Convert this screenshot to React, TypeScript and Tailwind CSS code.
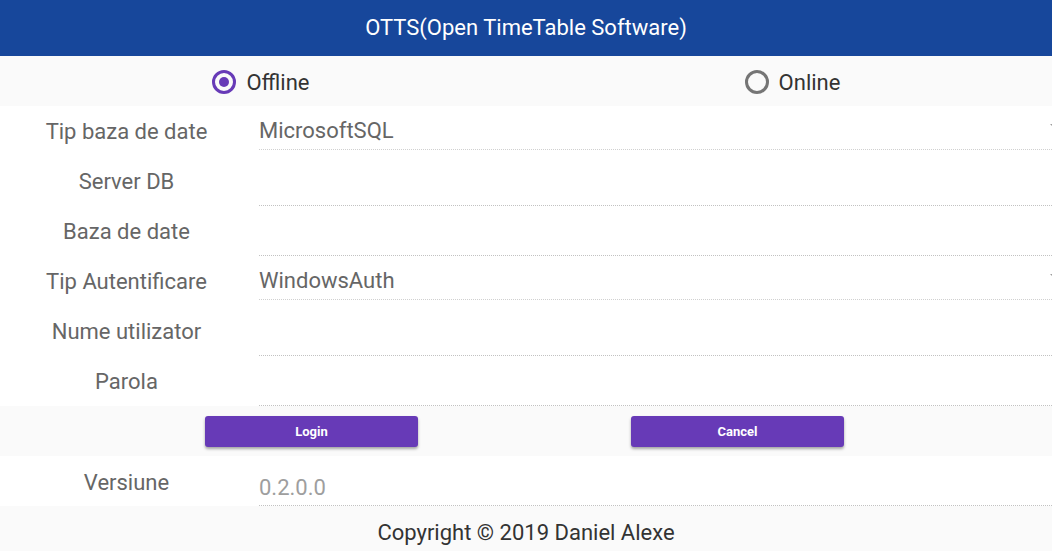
import { useState } from "react";

const fieldRows = [
    { label: "Tip baza de date", value: "MicrosoftSQL", select: true },
    { label: "Server DB", value: "", select: false },
    { label: "Baza de date", value: "", select: false },
    { label: "Tip Autentificare", value: "WindowsAuth", select: true },
    { label: "Nume utilizator", value: "", select: false },
    { label: "Parola", value: "", select: false },
];

const Radio = ({ checked, label, onClick }: { checked: boolean; label: string; onClick: () => void }) => (
    <button type="button" onClick={onClick} className="flex items-center gap-[10px]">
        <span
            className={
                checked
                    ? "w-[24px] h-[24px] rounded-full border-[3px] border-[#673ab7] flex items-center justify-center"
                    : "w-[24px] h-[24px] rounded-full border-[3px] border-[#757575] flex items-center justify-center"
            }
        >
            {checked && <span className="w-[10px] h-[10px] rounded-full bg-[#673ab7]" />}
        </span>
        <span className="text-[22px] text-[#333]">{label}</span>
    </button>
);

const App = () => {
    const [mode, setMode] = useState<"offline" | "online">("offline");

    return (
        <div className="w-[1052px] h-[551px] overflow-hidden bg-white font-['Roboto',sans-serif]">
            <div className="h-[56px] bg-[#17479b] flex items-center justify-center pb-[2px]">
                <h1 className="text-white text-[22px]">OTTS(Open TimeTable Software)</h1>
            </div>

            <div className="h-[50px] bg-[#fafafa] grid grid-cols-2">
                <div className="flex items-center justify-center pr-[4px] pt-[2px]">
                    <Radio checked={mode === "offline"} label="Offline" onClick={() => setMode("offline")} />
                </div>
                <div className="flex items-center justify-center pl-[7px] pt-[2px]">
                    <Radio checked={mode === "online"} label="Online" onClick={() => setMode("online")} />
                </div>
            </div>

            {fieldRows.map((row) => (
                <div key={row.label} className="h-[50px] flex items-start">
                    <div className="w-[253px] h-[50px] flex items-center justify-center text-[22px] text-[#666]">
                        {row.label}
                    </div>
                    <div
                        className={
                            row.select
                                ? "ml-[6px] flex-1 h-[44px] pt-[6px] flex items-center justify-between border-b border-dotted border-[#d0d0d0]"
                                : "ml-[6px] flex-1 h-[50px] border-b border-dotted border-[#c2c2c2]"
                        }
                    >
                        {row.select && (
                            <>
                                <span className="text-[22px] text-[#666]">{row.value}</span>
                                <span className="mr-[-8px] mb-[8px] w-0 h-0 border-l-[5px] border-r-[5px] border-t-[5px] border-l-transparent border-r-transparent border-t-[#9e9e9e]" />
                            </>
                        )}
                    </div>
                </div>
            ))}

            <div className="h-[50px] bg-[#fafafa] grid grid-cols-2">
                <div className="pl-[205px] pt-[10px]">
                    <button
                        type="button"
                        className="w-[213px] h-[31px] rounded-[3px] bg-[#673ab7] text-white text-[13px] font-bold shadow-[0_2px_3px_rgba(0,0,0,0.35)]"
                    >
                        Login
                    </button>
                </div>
                <div className="pl-[105px] pt-[10px]">
                    <button
                        type="button"
                        className="w-[213px] h-[31px] rounded-[3px] bg-[#673ab7] text-white text-[13px] font-bold shadow-[0_2px_3px_rgba(0,0,0,0.35)]"
                    >
                        Cancel
                    </button>
                </div>
            </div>

            <div className="h-[50px] flex items-start">
                <div className="w-[253px] h-[50px] flex items-center justify-center pt-[2px] text-[22px] text-[#666]">
                    Versiune
                </div>
                <div className="ml-[6px] flex-1 h-[50px] pt-[14px] flex items-center border-b border-dotted border-[#c2c2c2]">
                    <span className="text-[22px] text-[#9e9e9e]">0.2.0.0</span>
                </div>
            </div>

            <div className="h-[45px] bg-[#fafafa] flex items-center justify-center pt-[7px]">
                <span className="text-[22px] text-[#333]">Copyright © 2019 Daniel Alexe</span>
            </div>
        </div>
    );
};

export default App;
